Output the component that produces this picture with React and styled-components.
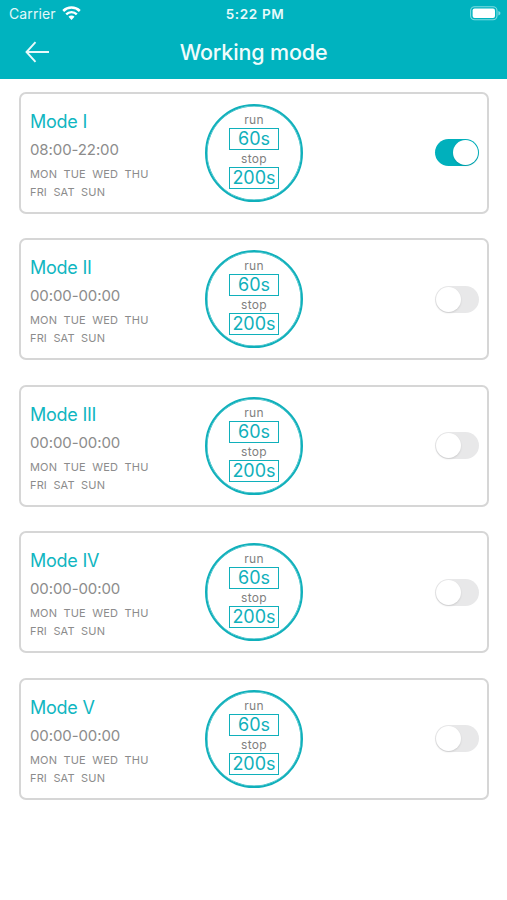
import { useState } from 'react';
import styled, { createGlobalStyle } from 'styled-components';

const initialModes = [
  { name: 'Mode I', time: '08:00-22:00', run: '60s', stop: '200s', on: true },
  { name: 'Mode II', time: '00:00-00:00', run: '60s', stop: '200s', on: false },
  { name: 'Mode III', time: '00:00-00:00', run: '60s', stop: '200s', on: false },
  { name: 'Mode IV', time: '00:00-00:00', run: '60s', stop: '200s', on: false },
  { name: 'Mode V', time: '00:00-00:00', run: '60s', stop: '200s', on: false },
];

const WifiIcon = () => (
  <svg width='19' height='15' viewBox='0 0 19 15' fill='none'>
    <path d='M1.2 5a11.8 11.8 0 0 1 16.6 0' stroke='#fff' strokeWidth='2.5' />
    <path d='M4.2 8.3a7.5 7.5 0 0 1 10.6 0' stroke='#fff' strokeWidth='2.4' />
    <path d='M9.5 14l-3-3.2a4.2 4.2 0 0 1 6 0z' fill='#fff' />
  </svg>
);

const BatteryIcon = () => (
  <svg width='31' height='15' viewBox='0 0 31 15' fill='none'>
    <rect x='0.6' y='0.7' width='26.4' height='13' rx='4' stroke='#7fdbe1' strokeWidth='1.1' />
    <rect x='2.6' y='2.5' width='22.4' height='9.4' rx='2' fill='#fff' />
    <path d='M28.4 5c1.4.5 2 1.3 2 2.2s-.6 1.7-2 2.2z' fill='#7fdbe1' />
  </svg>
);

const BackIcon = () => (
  <svg width='25' height='22' viewBox='0 0 25 22' fill='none'>
    <path d='M10.5 1.2L1.5 11l9 9.8M1.5 11h22.5' stroke='#e8fafb' strokeWidth='1.9' />
  </svg>
);

const App = () => {
  const [modes, setModes] = useState(initialModes);

  const toggleMode = (name) => {
    setModes(modes.map((mode) => (mode.name === name ? { ...mode, on: !mode.on } : mode)));
  };

  return (
    <Page>
      <GlobalStyle />
      <Header>
        <StatusBar>
          <Carrier>
            Carrier <WifiIcon />
          </Carrier>
          <Clock>5:22 PM</Clock>
          <Battery>
            <BatteryIcon />
          </Battery>
        </StatusBar>
        <NavBar>
          <BackButton type='button' aria-label='Back'>
            <BackIcon />
          </BackButton>
          <Title>Working mode</Title>
        </NavBar>
      </Header>
      <ModeList>
        {modes.map((mode) => (
          <ModeCard key={mode.name}>
            <Info>
              <ModeName>{mode.name}</ModeName>
              <Time>{mode.time}</Time>
              <Days>
                {'MON  TUE  WED  THU\nFRI  SAT  SUN'}
              </Days>
            </Info>
            <Dial>
              <DialLabel>run</DialLabel>
              <DialValue>{mode.run}</DialValue>
              <DialLabel>stop</DialLabel>
              <DialValue>{mode.stop}</DialValue>
            </Dial>
            <Switch
              type='button'
              role='switch'
              aria-checked={mode.on}
              aria-label={mode.name}
              $on={mode.on}
              onClick={() => toggleMode(mode.name)}
            >
              <Knob />
            </Switch>
          </ModeCard>
        ))}
      </ModeList>
    </Page>
  );
};

export default App;

const GlobalStyle = createGlobalStyle`
  * {
    box-sizing: border-box;
  }
  body {
    margin: 0;
    background: #fff;
    font-family: Inter, 'Liberation Sans', sans-serif;
  }
`;

const Page = styled.div`
  height: 900px;
  overflow: hidden;
  background: #fff;
`;

const Header = styled.header`
  height: 79px;
  background: #00b3bf;
  color: #fff;
`;

const StatusBar = styled.div`
  display: grid;
  grid-template-columns: 1fr auto 1fr;
  align-items: center;
  height: 27px;
  padding: 0 6px 0 9px;
`;

const Carrier = styled.div`
  display: flex;
  align-items: center;
  gap: 6px;
  color: #e3f8f9;
  font-size: 14px;
  letter-spacing: 0.1px;
`;

const Clock = styled.div`
  font-size: 13.5px;
  font-weight: 600;
  letter-spacing: 0.65px;
  color: #e8fafb;
`;

const Battery = styled.div`
  display: flex;
  justify-content: flex-end;
`;

const NavBar = styled.div`
  display: grid;
  grid-template-columns: 60px 1fr 60px;
  align-items: center;
  height: 49px;
`;

const BackButton = styled.button`
  display: flex;
  padding: 0 0 0 25px;
  border: 0;
  background: none;
`;

const Title = styled.h1`
  margin: 0;
  color: #f0fcfc;
  font-size: 21.5px;
  font-weight: 550;
  line-height: 26px;
  letter-spacing: -0.15px;
  text-align: center;
`;

const ModeList = styled.main`
  display: flex;
  flex-direction: column;
  gap: 24.6px;
  padding: 12.5px 18px 0 19px;
`;

const ModeCard = styled.section`
  display: grid;
  grid-template-columns: 175px 98px 1fr;
  align-items: center;
  height: 122px;
  padding: 0 8px 0 9px;
  border: 2px solid #d6d6d6;
  border-radius: 7px;
`;

const Info = styled.div`
  padding-top: 3px;
`;

const ModeName = styled.h2`
  margin: 0;
  color: #10b6c1;
  font-size: 18px;
  font-weight: 400;
  line-height: 28px;
  letter-spacing: -0.25px;
`;

const Time = styled.div`
  margin-bottom: 1px;
  color: #8c8c8c;
  font-size: 15px;
  line-height: 28px;
  letter-spacing: -0.1px;
`;

const Days = styled.div`
  color: #8c8c8c;
  font-size: 11px;
  line-height: 18px;
  letter-spacing: 0.14px;
  white-space: pre;
`;

const Dial = styled.div`
  display: flex;
  flex-direction: column;
  align-items: center;
  width: 98px;
  height: 98px;
  padding-top: 5px;
  border: 2px solid #10b0bb;
  border-radius: 50%;
  box-shadow: inset 0 0 0 0.5px #10b0bb;
`;

const DialLabel = styled.div`
  height: 17px;
  color: #808080;
  font-size: 12px;
  line-height: 17px;
  letter-spacing: 0.3px;
`;

const DialValue = styled.div`
  width: 50px;
  height: 22px;
  border: 1px solid #10b0bb;
  color: #10b0bb;
  font-size: 18px;
  line-height: 20px;
  text-align: center;
`;

const Switch = styled.button`
  display: flex;
  align-items: center;
  justify-self: end;
  justify-content: ${({ $on }) => ($on ? 'flex-end' : 'flex-start')};
  width: 44px;
  height: 27px;
  padding: 1px;
  border: 0;
  border-radius: 14px;
  background: ${({ $on }) => ($on ? '#00b0bc' : '#e8e8e9')};
`;

const Knob = styled.span`
  width: 25px;
  height: 25px;
  border-radius: 50%;
  background: #fff;
  box-shadow: 0 1px 2px rgba(0, 0, 0, 0.12);
`;
